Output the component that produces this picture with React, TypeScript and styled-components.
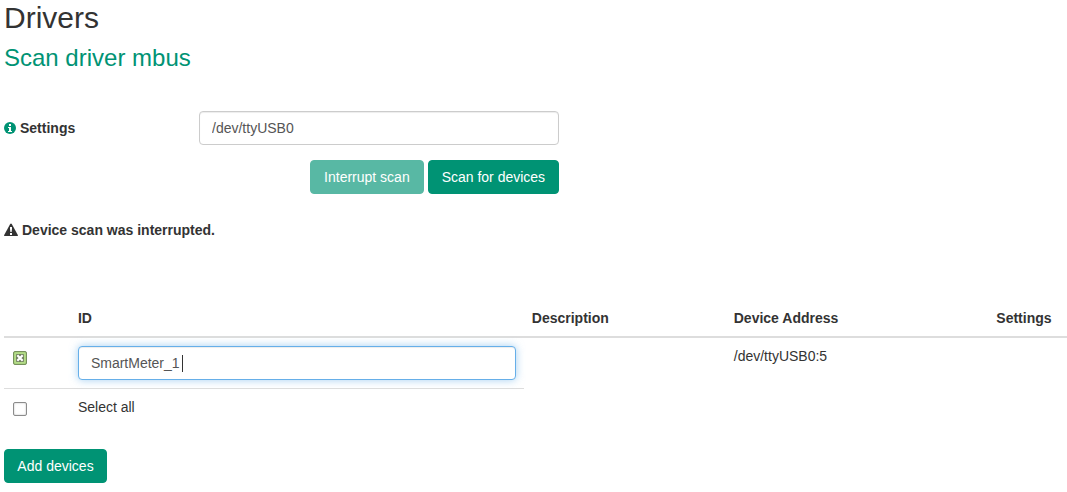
import React, { useState } from "react";
import styled, { createGlobalStyle, css } from "styled-components";

const GlobalStyle = createGlobalStyle`
  *, *::before, *::after { box-sizing: border-box; }
  body {
    margin: 0;
    background: #fff;
    color: #333;
    font-family: "Liberation Sans", Arial, sans-serif;
    font-size: 14px;
    line-height: 20px;
    overflow-x: hidden;
  }
`;

const Page = styled.main`
  padding: 0 0 8px 4px;
`;

const Title = styled.h1`
  margin: 0;
  padding-top: 1px;
  font-size: 30px;
  line-height: 34px;
  font-weight: 400;
`;

const Subtitle = styled.h2`
  margin: 10px 0 40px;
  font-size: 24px;
  line-height: 26px;
  font-weight: 400;
  color: #009374;
`;

const ScanForm = styled.form`
  width: 52.2%;
  min-width: 440px;
`;

const Field = styled.div`
  display: grid;
  grid-template-columns: 195px 1fr;
  align-items: center;
`;

const IconText = styled.span`
  display: inline-flex;
  align-items: center;
  gap: 4px;
  font-weight: 700;
`;

const FieldLabel = styled(IconText).attrs({ as: "label" })<{ htmlFor?: string }>``;

const TextInput = styled.input<{ $active?: boolean }>`
  display: block;
  width: 100%;
  height: 34px;
  padding: 6px 12px;
  border: 1px solid #ccc;
  border-radius: 4px;
  outline: none;
  background: #fff;
  color: #555;
  font: inherit;
  box-shadow: inset 0 1px 1px rgba(0, 0, 0, 0.075);
  ${(p) =>
    p.$active &&
    css`
      border-color: #66afe9;
      caret-color: transparent;
      box-shadow: inset 0 1px 1px rgba(0, 0, 0, 0.075), 0 0 8px rgba(102, 175, 233, 0.6);
    `}
`;

const Actions = styled.div`
  display: flex;
  justify-content: flex-end;
  gap: 4px;
  margin-top: 15px;
`;

const Button = styled.button<{ $minWidth: number }>`
  height: 34px;
  min-width: ${(p) => p.$minWidth}px;
  padding: 6px 12px;
  border: 1px solid #009374;
  border-radius: 4px;
  background: #009374;
  color: #fff;
  font: inherit;
  white-space: nowrap;
  &:disabled { opacity: 0.65; }
`;

const Status = styled.p`
  margin: 26px 0 58px;
`;

const DeviceTable = styled.table`
  width: 100%;
  margin-bottom: 24px;
  table-layout: fixed;
  border-collapse: separate;
  border-spacing: 0;
`;

const HeadCell = styled.th`
  padding: 8px;
  border-bottom: 2px solid #ddd;
  text-align: left;
  font-weight: 700;
  white-space: nowrap;
`;

const Cell = styled.td<{ $ruled?: boolean }>`
  padding: 8px;
  vertical-align: top;
  border-bottom: ${(p) => (p.$ruled ? "1px solid #ddd" : "0")};
`;

const Checkbox = styled.input.attrs({ type: "checkbox" })`
  appearance: none;
  display: block;
  width: 14px;
  height: 14px;
  margin: 5px 0 0 1px;
  border: 1px solid #8c8c8c;
  border-radius: 2px;
  background: #fff;
  box-shadow: inset 0 0 2px #bbb;
  &:checked {
    border-color: #76915c;
    background: #b3dc87;
    box-shadow: inset 0 0 1px #6f8a55;
  }
`;

const CheckHolder = styled.div`
  position: relative;
  width: 15px;
  svg {
    position: absolute;
    top: 0;
    left: 1px;
    pointer-events: none;
  }
`;

const CaretHolder = styled.div`
  position: relative;
`;

const Caret = styled.span`
  position: absolute;
  top: 9px;
  left: 104px;
  width: 1px;
  height: 17px;
  background: #333;
`;

const InfoIcon = () => (
  <svg width="12" height="14" viewBox="0 0 12 14" aria-hidden="true">
    <circle cx="6" cy="7" r="6" fill="#009374" />
    <path fill="#fff" d="M5 3h2v2H5zM4 6h3v4h1v1H4v-1h1V7H4z" />
  </svg>
);

const WarningIcon = () => (
  <svg width="14" height="14" viewBox="0 0 14 14" aria-hidden="true">
    <path fill="#333" d="M6.2.9Q7 0 7.8.9l6 11.1q.5 1-.8 1H1Q-.3 13 .2 12z" />
    <path fill="#fff" d="M6 4h2v2l-.4 3H6.400L6 6zM6 10h2v2H6z" />
  </svg>
);

const CrossMark = () => (
  <svg width="14" height="14" viewBox="0 0 14 14" aria-hidden="true">
    <rect x="3" y="3" width="8" height="8" rx="1" fill="#71805f" />
    <path stroke="#fff" strokeWidth="2.2" d="M4.300 4.300l5.400 5.400M9.700 4.300l-5.400 5.400" />
  </svg>
);

export default function App() {
  const [port, setPort] = useState("/dev/ttyUSB0");
  const [deviceId, setDeviceId] = useState("SmartMeter_1");
  const [selected, setSelected] = useState(true);
  const [all, setAll] = useState(false);

  return (
    <>
      <GlobalStyle />
      <Page>
        <Title>Drivers</Title>
        <Subtitle>Scan driver mbus</Subtitle>
        <ScanForm onSubmit={(e) => e.preventDefault()}>
          <Field>
            <FieldLabel htmlFor="settings">
              <InfoIcon />
              Settings
            </FieldLabel>
            <TextInput id="settings" value={port} onChange={(e) => setPort(e.target.value)} />
          </Field>
          <Actions>
            <Button type="button" $minWidth={114} disabled>Interrupt scan</Button>
            <Button type="submit" $minWidth={131}>Scan for devices</Button>
          </Actions>
        </ScanForm>
        <Status role="status">
          <IconText>
            <WarningIcon />
            Device scan was interrupted.
          </IconText>
        </Status>
        <DeviceTable>
          <colgroup>
            <col style={{ width: "6.2%" }} />
            <col style={{ width: "42.7%" }} />
            <col style={{ width: "19%" }} />
            <col style={{ width: "24.7%" }} />
            <col />
          </colgroup>
          <thead>
            <tr>
              <HeadCell />
              <HeadCell scope="col">ID</HeadCell>
              <HeadCell scope="col">Description</HeadCell>
              <HeadCell scope="col">Device Address</HeadCell>
              <HeadCell scope="col">Settings</HeadCell>
            </tr>
          </thead>
          <tbody>
            <tr>
              <Cell $ruled>
                <CheckHolder>
                  <Checkbox
                    aria-label="Select device"
                    checked={selected}
                    onChange={(e) => setSelected(e.target.checked)}
                  />
                  {selected && <CrossMark />}
                </CheckHolder>
              </Cell>
              <Cell $ruled>
                <CaretHolder>
                  <TextInput
                    $active
                    aria-label="Device ID"
                    value={deviceId}
                    onChange={(e) => setDeviceId(e.target.value)}
                  />
                  <Caret />
                </CaretHolder>
              </Cell>
              <Cell />
              <Cell>/dev/ttyUSB0:5</Cell>
              <Cell />
            </tr>
            <tr>
              <Cell>
                <Checkbox id="all" checked={all} onChange={(e) => setAll(e.target.checked)} />
              </Cell>
              <Cell>
                <label htmlFor="all">Select all</label>
              </Cell>
              <Cell />
              <Cell />
              <Cell />
            </tr>
          </tbody>
        </DeviceTable>
        <Button type="button" $minWidth={103}>Add devices</Button>
      </Page>
    </>
  );
}
